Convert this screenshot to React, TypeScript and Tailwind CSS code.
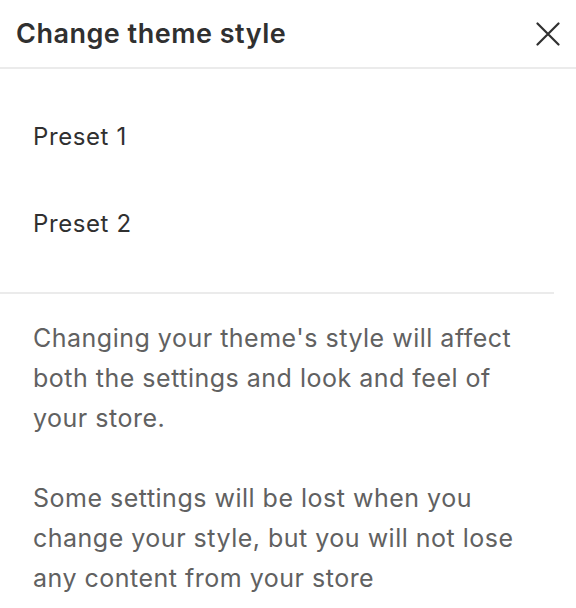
import { useState } from 'react';

const presets = ['Preset 1', 'Preset 2'];

function CloseIcon() {
  return (
    <svg width="24" height="24" viewBox="0 0 24 24" fill="none" aria-hidden="true">
      <path d="M1.5 1.5L22.5 22.5M22.5 1.5L1.5 22.5" stroke="#303030" strokeWidth="2.2" strokeLinecap="round" />
    </svg>
  );
}

export default function App() {
  const [selected, setSelected] = useState<string | null>(null);

  return (
    <div
      className="w-[576px] h-[608px] bg-white overflow-hidden text-[#303030]"
      style={{ fontFamily: 'Inter, "Noto Sans", sans-serif' }}
    >
      <div className="h-[69px] flex items-center justify-between pl-4 pr-3 border-b-2 border-[#ebebeb]">
        <h2 className="text-[27px] font-semibold tracking-[0.5px] pt-[2px]">Change theme style</h2>
        <button className="w-8 h-8 flex items-center justify-center">
          <CloseIcon />
        </button>
      </div>

      <div className="pt-6 pb-[25px] mr-[22px] border-b-2 border-[#ebebeb]">
        {presets.map((p) => (
          <button
            key={p}
            onClick={() => setSelected(p)}
            className={`w-full h-[87px] flex items-center pl-[33px] text-left text-[24px] tracking-[0.6px] ${
              selected === p ? 'bg-[#f7f7f7]' : ''
            }`}
          >
            {p}
          </button>
        ))}
      </div>

      <div className="pl-[33px] pr-[40px] pt-[24px] text-[25px] leading-[40px] tracking-[0.5px] text-[#616161]">
        <p>Changing your theme's style will affect both the settings and look and feel of your store.</p>
        <p className="mt-[40px]">
          Some settings will be lost when you change your style, but you will not lose any content from your store
        </p>
      </div>
    </div>
  );
}
